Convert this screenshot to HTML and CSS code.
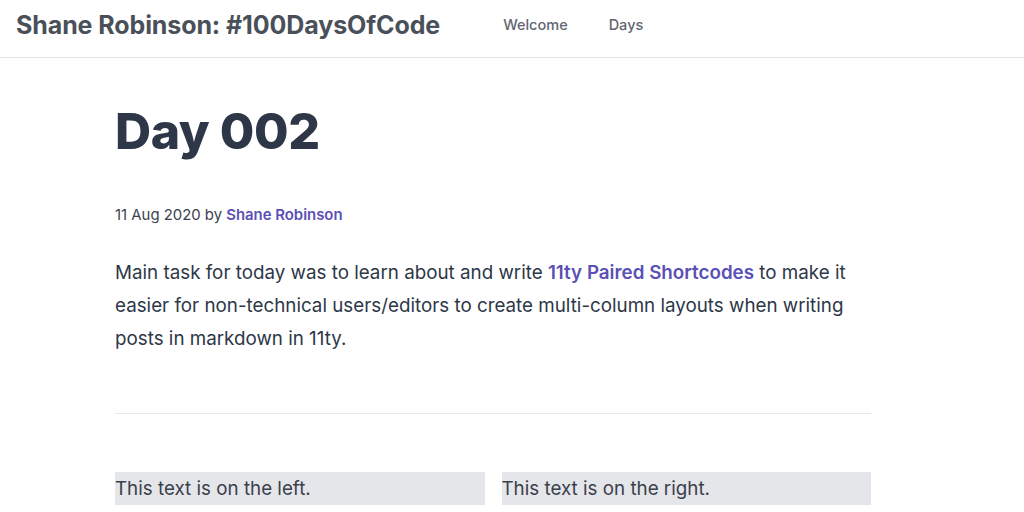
FILE: index.html
```html
<!DOCTYPE html>
<html>
<head>
<meta charset="utf-8">
<link rel="stylesheet" href="styles.css">
</head>
<body>
<header class="site-header">
  <a class="brand" href="#">Shane Robinson: #100DaysOfCode</a>
  <nav class="nav">
    <a href="#">Welcome</a>
    <a href="#">Days</a>
  </nav>
</header>
<main class="post">
  <h1 class="title">Day 002</h1>
  <p class="meta">11 Aug 2020 by <a href="#">Shane Robinson</a></p>
  <p class="lead">Main task for today was to learn about and write <a href="#">11ty Paired Shortcodes</a> to make it easier for non-technical users/editors to create multi-column layouts when writing posts in markdown in 11ty.</p>
  <hr class="rule">
  <div class="cols">
    <div class="col">This text is on the left.</div>
    <div class="col">This text is on the right.</div>
  </div>
</main>
</body>
</html>
```
FILE: styles.css
```css
* { box-sizing: border-box; }
html, body { margin: 0; padding: 0; background: #fff; }
body { font-family: Inter, "Noto Sans", sans-serif; color: #2d3748; }
a { text-decoration: none; }
.site-header {
  height: 58px;
  border-bottom: 1px solid #e2e2e2;
  display: flex;
  align-items: center;
  padding: 0 16px;
  gap: 63px;
}
.brand { font-size: 25px; font-weight: 700; color: #4a5059; letter-spacing: -0.1px; padding-bottom: 8px; }
.nav { display: flex; gap: 41px; padding-bottom: 8px; }
.nav a { font-size: 14.5px; font-weight: 500; color: #5f6670; }
.post { width: 756px; margin-left: 115px; }
.title { margin: 43px 0 0; font-size: 50px; font-weight: 800; line-height: 60px; color: #2d3748; letter-spacing: -0.4px; }
.meta { margin: 45px 0 0; font-size: 14.9px; color: #3c4250; }
.meta a { color: #5a50b5; font-weight: 600; }
.lead { margin: 32px 0 0; font-size: 18.8px; line-height: 33px; color: #2d3748; }
.lead a { color: #5a50b5; font-weight: 600; }
.rule { margin: 58px 0 0; border: 0; border-top: 1px solid #e6e7ea; }
.cols { margin-top: 58px; display: grid; grid-template-columns: 1fr 1fr; gap: 17px; }
.col { background: #e5e6e9; height: 33px; line-height: 33px; font-size: 18.8px; color: #3a404c; }
```
